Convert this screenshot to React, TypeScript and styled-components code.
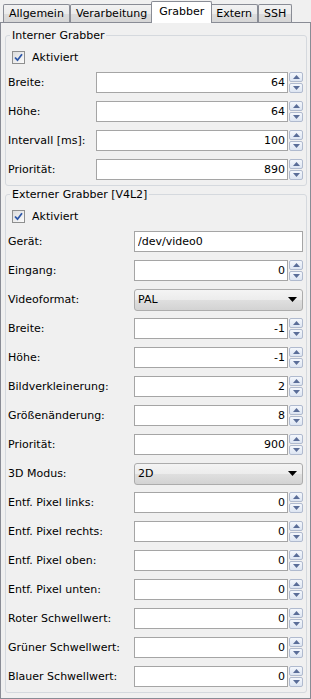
import styled, { createGlobalStyle } from "styled-components";

type Row =
  | { kind: "spin"; label: string; value: string }
  | { kind: "text"; label: string; value: string }
  | { kind: "combo"; label: string; value: string };

const tabs = ["Allgemein", "Verarbeitung", "Grabber", "Extern", "SSH"];

const internRows: Row[] = [
  { kind: "spin", label: "Breite:", value: "64" },
  { kind: "spin", label: "Höhe:", value: "64" },
  { kind: "spin", label: "Intervall [ms]:", value: "100" },
  { kind: "spin", label: "Priorität:", value: "890" },
];

const externRows: Row[] = [
  { kind: "text", label: "Gerät:", value: "/dev/video0" },
  { kind: "spin", label: "Eingang:", value: "0" },
  { kind: "combo", label: "Videoformat:", value: "PAL" },
  { kind: "spin", label: "Breite:", value: "-1" },
  { kind: "spin", label: "Höhe:", value: "-1" },
  { kind: "spin", label: "Bildverkleinerung:", value: "2" },
  { kind: "spin", label: "Größenänderung:", value: "8" },
  { kind: "spin", label: "Priorität:", value: "900" },
  { kind: "combo", label: "3D Modus:", value: "2D" },
  { kind: "spin", label: "Entf. Pixel links:", value: "0" },
  { kind: "spin", label: "Entf. Pixel rechts:", value: "0" },
  { kind: "spin", label: "Entf. Pixel oben:", value: "0" },
  { kind: "spin", label: "Entf. Pixel unten:", value: "0" },
  { kind: "spin", label: "Roter Schwellwert:", value: "0" },
  { kind: "spin", label: "Grüner Schwellwert:", value: "0" },
  { kind: "spin", label: "Blauer Schwellwert:", value: "0" },
];

const Arrow = ({ up }: { up?: boolean }) => (
  <svg width="7" height="4" viewBox="0 0 7 4">
    <polygon points={up ? "0,4 3.5,0 7,4" : "0,0 7,0 3.5,4"} fill="#5a6d98" />
  </svg>
);

const CheckMark = () => (
  <svg width="11" height="11" viewBox="0 0 11 11">
    <path d="M2 5.5 L4.5 8.2 L9 2.3" stroke="#2d57a8" strokeWidth="1.8" fill="none" />
  </svg>
);

const Field = ({ row }: { row: Row }) => {
  if (row.kind === "combo") {
    return (
      <Form.Combo>
        <span>{row.value}</span>
        <svg width="9" height="5" viewBox="0 0 9 5">
          <polygon points="0,0 9,0 4.5,5" fill="#000" />
        </svg>
      </Form.Combo>
    );
  }
  if (row.kind === "text") {
    return <Form.TextInput readOnly value={row.value} />;
  }
  return (
    <>
      <Form.NumberInput readOnly value={row.value} />
      <Form.Spinner>
        <Form.SpinButton>
          <Arrow up />
        </Form.SpinButton>
        <Form.SpinButton>
          <Arrow />
        </Form.SpinButton>
      </Form.Spinner>
    </>
  );
};

const GrabberGroup = ({ title, rows, labelWidth }: { title: string; rows: Row[]; labelWidth: number }) => (
  <Group.Box>
    <Group.Title>{title}</Group.Title>
    <Group.CheckRow>
      <Group.Check>
        <CheckMark />
      </Group.Check>
      Aktiviert
    </Group.CheckRow>
    <Form.Grid $labelWidth={labelWidth}>
      {rows.map((row) => (
        <Form.Cell key={row.label + row.value}>
          <Form.Label>{row.label}</Form.Label>
          <Field row={row} />
        </Form.Cell>
      ))}
    </Form.Grid>
  </Group.Box>
);

export default function App() {
  return (
    <>
      <GlobalStyle />
      <Window.Wrapper>
        <Window.TabBar>
          {tabs.map((t) => (
            <Window.Tab key={t} $active={t === "Grabber"}>
              {t}
            </Window.Tab>
          ))}
        </Window.TabBar>
        <Window.Pane>
          <GrabberGroup title="Interner Grabber" rows={internRows} labelWidth={88} />
          <GrabberGroup title="Externer Grabber [V4L2]" rows={externRows} labelWidth={126} />
        </Window.Pane>
      </Window.Wrapper>
    </>
  );
}

const GlobalStyle = createGlobalStyle`
  html, body {
    margin: 0;
    padding: 0;
    background: #f0f0f0;
  }
  body {
    font-family: "DejaVu Sans", Verdana, sans-serif;
    font-size: 11px;
    color: #000;
  }
`;

const Window = {
  Wrapper: styled.div`
    width: 311px;
    height: 699px;
    display: flex;
    flex-direction: column;
    overflow: hidden;
  `,
  TabBar: styled.div`
    height: 22px;
    display: flex;
    align-items: flex-end;
    padding-left: 3px;
    position: relative;
    z-index: 1;
  `,
  Tab: styled.div<{ $active?: boolean }>`
    box-sizing: border-box;
    border: 1px solid #898c95;
    border-bottom: none;
    border-radius: 2px 2px 0 0;
    white-space: nowrap;
    text-align: center;
    ${(p) =>
      p.$active
        ? `
      height: 22px;
      margin: 0 -2px -1px;
      padding: 2px 7px 0;
      line-height: 15px;
      background: #fff;
      position: relative;
      z-index: 2;
    `
        : `
      height: 18px;
      padding: 0 5px;
      line-height: 17px;
      background: linear-gradient(#f2f2f2, #ebebeb 50%, #dddddd 51%, #d6d6d6);
    `}
  `,
  Pane: styled.div`
    flex: 1;
    box-sizing: border-box;
    border: 1px solid #898c95;
    padding: 6px 3px 0 4px;
    background: #f0f0f0;
  `,
};

const Group = {
  Box: styled.fieldset`
    margin: 0 0 2px;
    padding: 5px 3px 5px 2px;
    border: 1px solid #d5d9de;
    border-radius: 3px;
    min-width: 0;
  `,
  Title: styled.legend`
    margin-left: 2px;
    padding: 0 2px;
    line-height: 13px;
  `,
  CheckRow: styled.div`
    height: 20px;
    display: flex;
    align-items: center;
    gap: 7px;
    padding-left: 4px;
  `,
  Check: styled.div`
    box-sizing: border-box;
    width: 13px;
    height: 13px;
    border: 1px solid #8e8f8f;
    background: linear-gradient(135deg, #dcdcdc, #fbfbfb);
    display: flex;
    align-items: center;
    justify-content: center;
  `,
};

const Form = {
  Grid: styled.div<{ $labelWidth: number }>`
    margin-top: 5px;
    display: grid;
    grid-template-columns: ${(p) => p.$labelWidth}px 1fr 15px;
    grid-auto-rows: 21px;
    row-gap: 8px;
    align-items: center;
  `,
  Cell: styled.div`
    display: contents;
  `,
  Label: styled.div`
    white-space: nowrap;
  `,
  NumberInput: styled.input`
    box-sizing: border-box;
    height: 21px;
    width: 100%;
    margin: 0;
    border: 1px solid #a5a5a5;
    background: #fff;
    padding: 0 2px;
    font: inherit;
    color: #000;
    text-align: right;
    outline: none;
  `,
  TextInput: styled.input`
    grid-column: span 2;
    box-sizing: border-box;
    height: 21px;
    width: 100%;
    margin: 0;
    border: 1px solid #a5a5a5;
    background: #fff;
    padding: 0 3px;
    font: inherit;
    color: #000;
    outline: none;
  `,
  Combo: styled.div`
    grid-column: span 2;
    box-sizing: border-box;
    height: 22px;
    border: 1px solid #acacac;
    border-radius: 3px;
    background: linear-gradient(#f4f4f4, #ececec 50%, #dfdfdf 51%, #d3d3d3);
    display: flex;
    align-items: center;
    justify-content: space-between;
    padding: 0 5px 0 3px;
  `,
  Spinner: styled.div`
    height: 21px;
    display: flex;
    flex-direction: column;
    gap: 1px;
    padding-left: 1px;
  `,
  SpinButton: styled.div`
    flex: 1;
    box-sizing: border-box;
    border: 1px solid #b0bace;
    border-radius: 2px;
    background: linear-gradient(#f4f7fc, #dde5f2);
    display: flex;
    align-items: center;
    justify-content: center;
  `,
};
